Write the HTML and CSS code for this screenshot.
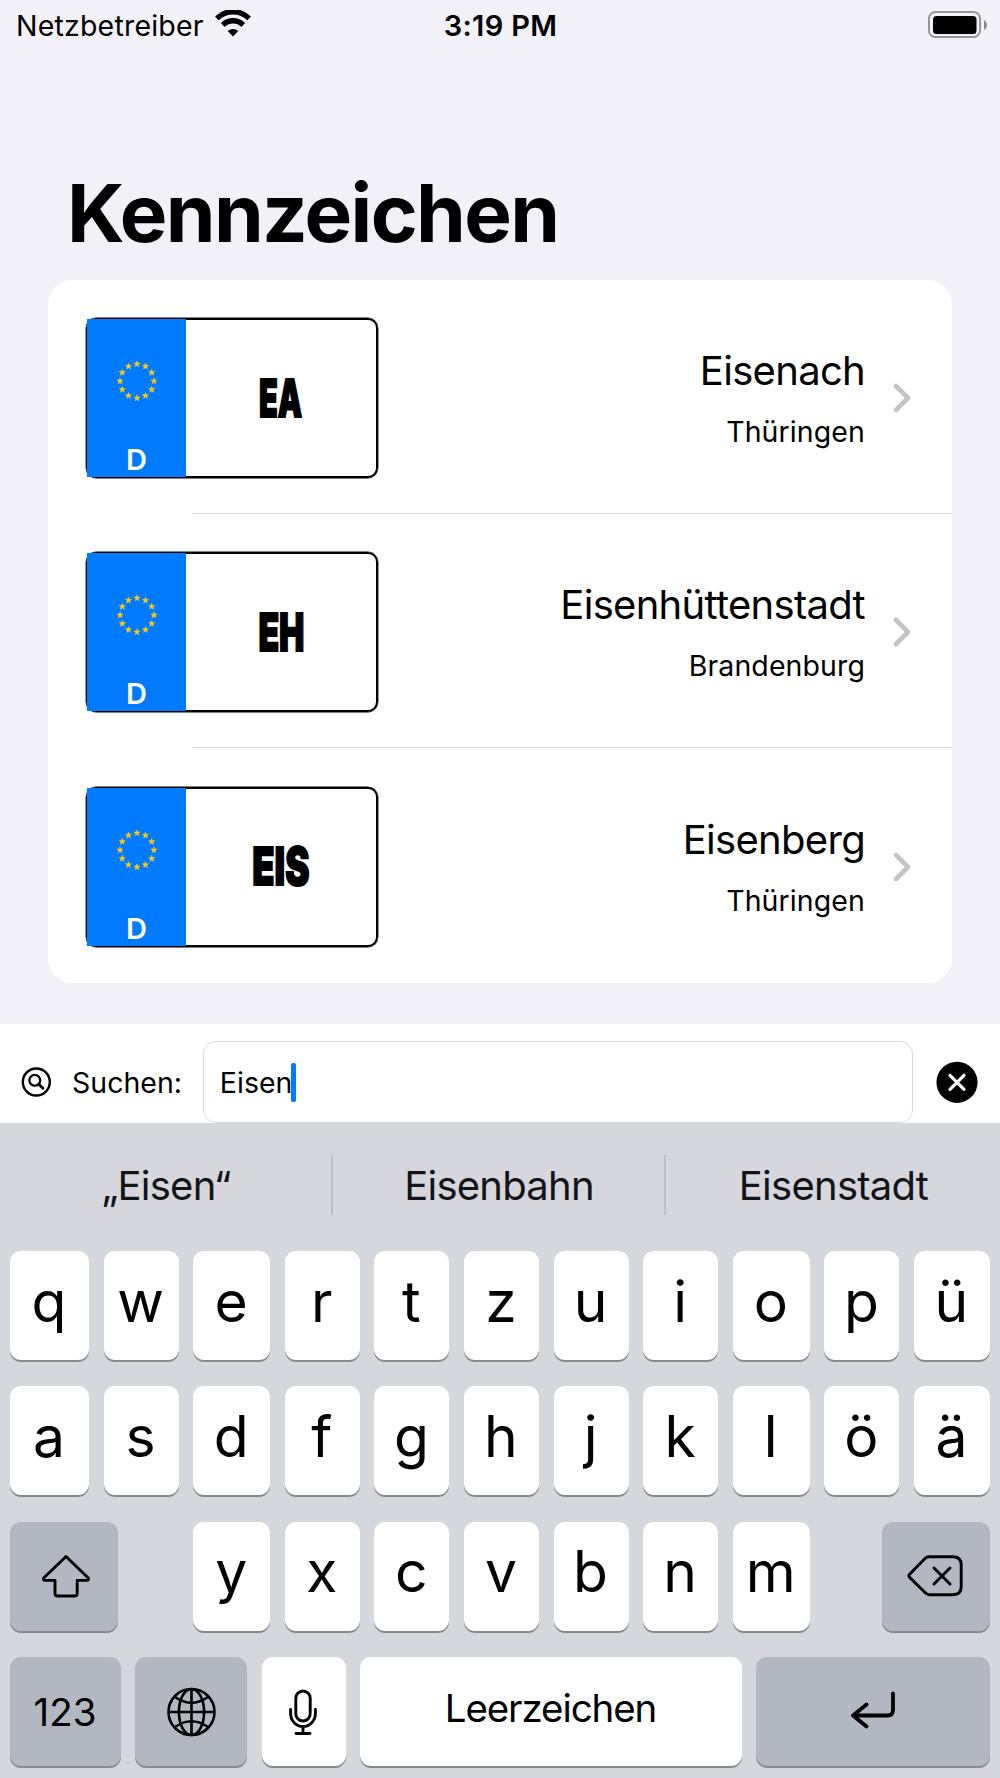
FILE: index.html
```
<!DOCTYPE html>
<html lang="de">

<head>
    <meta charset="UTF-8" />
    <meta name="viewport" content="width=device-width, initial-scale=1.0" />
    <title>Kennzeichen</title>
    <link rel="stylesheet" href="styles.css">
</head>

<body>
    <div class="status-bar">
        <div class="carrier">
            <span>Netzbetreiber</span>
            <svg class="wifi" viewBox="0 0 36 27" width="36" height="27">
                <path d="M1.8 8.4 A23 23 0 0 1 34.2 8.4" fill="none" stroke="#000" stroke-width="5.4" />
                <path d="M7.8 15 A14.4 14.4 0 0 1 28.2 15" fill="none" stroke="#000" stroke-width="5.4" />
                <path d="M12.7 21 A8 8 0 0 1 23.3 21 L18 26.5 Z" />
            </svg>
        </div>
        <span class="time">3:19 PM</span>
        <svg class="battery" viewBox="0 0 60 28" width="60" height="28">
            <rect x="1" y="1" width="51" height="25" rx="6.5" fill="none" stroke="#96959b" stroke-width="2" />
            <rect x="5" y="5" width="43.5" height="18" rx="3.5" />
            <path d="M56 9 Q59 11 59 14 Q59 17 56 19 Z" fill="#85848a" />
        </svg>
    </div>

    <h1>Kennzeichen</h1>

    <main class="list" id="list"></main>

    <div class="search">
        <svg class="search-icon" viewBox="0 0 30 30" width="30" height="30" fill="none" stroke="#000" stroke-linecap="round">
            <circle cx="15.3" cy="15" r="13.5" stroke-width="2.4" />
            <circle cx="13.8" cy="13.3" r="5.4" stroke-width="2.3" />
            <path d="M17.8 17.3 L21.9 21.3" stroke-width="2.8" />
        </svg>
        <label>Suchen:</label>
        <div class="field"><span>Eisen</span><i class="caret"></i></div>
        <svg class="clear" viewBox="0 0 42 42" width="42" height="42">
            <circle cx="21" cy="21.3" r="20.6" />
            <path d="M14 14.3 L28 28.3 M28 14.3 L14 28.3" stroke="#fff" stroke-width="3.2" stroke-linecap="round" />
        </svg>
    </div>

    <div class="keyboard">
        <div class="suggestions">
            <div>„Eisen“</div>
            <div>Eisenbahn</div>
            <div>Eisenstadt</div>
        </div>
        <div class="keys" id="row1"></div>
        <div class="keys" id="row2"></div>
        <div class="keys" id="row3">
            <div class="key dark shift">
                <svg viewBox="0 0 50 44" width="50" height="44" fill="none" stroke="#000" stroke-width="2.9" stroke-linejoin="round">
                    <path d="M25 2.5 L47.3 24 Q48 26.4 46 26.4 H36.2 V39.5 Q36.2 42 33.5 42 H16.5 Q14 42 14 39.5 V26.4 H4 Q2 26.4 2.7 24 Z" />
                </svg>
            </div>
            <div class="key dark backspace">
                <svg viewBox="0 0 56 42" width="56" height="42" fill="none" stroke="#000" stroke-width="2.9" stroke-linecap="round" stroke-linejoin="round">
                    <path d="M18.5 3 Q20.5 1.8 22.5 1.8 H46 Q54.2 1.8 54.2 10 V31.5 Q54.2 39.7 46 39.7 H22.5 Q20.3 39.7 18.3 37.7 L2.6 22.4 Q1.2 20.8 2.6 19.2 Z" />
                    <path d="M27 13 L43 29 M43 13 L27 29" />
                </svg>
            </div>
        </div>
        <div class="bottom-row">
            <div class="key dark"><span class="num">123</span></div>
            <div class="key dark">
                <svg viewBox="0 0 50 50" width="50" height="50" fill="none" stroke="#000" stroke-width="2.6">
                    <circle cx="25.5" cy="25" r="23" />
                    <ellipse cx="25.5" cy="25" rx="12.6" ry="23" />
                    <path d="M25.5 2 V48 M2.5 25 H48.5 M9 10 Q25.5 21.5 42 10 M9 40 Q25.5 28.5 42 40" />
                </svg>
            </div>
            <div class="key mic">
                <svg viewBox="0 0 30 48" width="30" height="48" fill="none" stroke="#000" stroke-width="2.9" stroke-linecap="round">
                    <rect x="7.8" y="3" width="14.4" height="30" rx="7.2" />
                    <path d="M2.6 21.5 V25.5 A12.4 13 0 0 0 27.4 25.5 V21.5 M15 38.6 V45.5 M8 45.5 H22" />
                </svg>
            </div>
            <div class="key"><span class="space">Leerzeichen</span></div>
            <div class="key dark return">
                <svg viewBox="0 0 46 38" width="46" height="38" fill="none" stroke="#000" stroke-width="3.8" stroke-linecap="round" stroke-linejoin="round">
                    <path d="M43 2.5 V19 Q43 24.5 37.5 24.5 H3 M16.5 13.5 L3 24.5 L16.5 35.5" />
                </svg>
            </div>
        </div>
    </div>

    <script>
        // stretch: horizontal squeeze that gives the plate lettering its width
        const places = [
            { code: "EA", stretch: 0.59, city: "Eisenach", state: "Thüringen" },
            { code: "EH", stretch: 0.65, city: "Eisenhüttenstadt", state: "Brandenburg" },
            { code: "EIS", stretch: 0.7, city: "Eisenberg", state: "Thüringen" }
        ];

        // twelve stars on a circle, all upright
        let stars = "";
        for (let i = 0; i < 12; i++) {
            const a = i * Math.PI / 6;
            const x = 20 + 17 * Math.sin(a);
            const y = 20 - 17 * Math.cos(a);
            stars += `<path transform="translate(${x.toFixed(2)} ${y.toFixed(2)})" d="M0 -3.2 L.8 -1 L3.1 -1 L1.3 .5 L1.9 2.8 L0 1.4 L-1.9 2.8 L-1.3 .5 L-3.1 -1 L-.8 -1 Z" />`;
        }

        document.getElementById("list").innerHTML = places.map(p => `
            <div class="row">
                <div class="plate">
                    <div class="euro">
                        <svg viewBox="0 0 40 40" width="40" height="40" fill="#fecb0e" stroke="#fecb0e" stroke-width=".5">${stars}</svg>
                        <span>D</span>
                    </div>
                    <div class="code"><span style="transform: scaleX(${p.stretch})">${p.code}</span></div>
                </div>
                <div class="place">
                    <div class="city">${p.city}</div>
                    <div class="state">${p.state}</div>
                </div>
                <svg class="chevron" viewBox="0 0 18 30" width="18" height="30">
                    <path d="M3 3 L15 15 L3 27" fill="none" stroke="#c4c4c7" stroke-width="4.6" stroke-linecap="round" stroke-linejoin="round" />
                </svg>
            </div>`).join("");

        const makeKeys = letters => [...letters].map(l => `<div class="key">${l}</div>`).join("");
        document.getElementById("row1").innerHTML = makeKeys("qwertzuiopü");
        document.getElementById("row2").innerHTML = makeKeys("asdfghjklöä");
        document.querySelector(".shift").insertAdjacentHTML("afterend", makeKeys("yxcvbnm"));
    </script>
</body>

</html>
```
FILE: styles.css
```
* {
    box-sizing: border-box;
}

body {
    margin: 0;
    height: 1778px;
    overflow: hidden;
    background: #f2f1f8;
    color: #000;
    font-family: Inter, "Liberation Sans", sans-serif;
}

svg {
    display: block;
    flex-shrink: 0;
}

.status-bar {
    height: 50px;
    padding: 0 12px 0 16px;
    display: grid;
    grid-template-columns: 1fr auto 1fr;
    align-items: center;
    font-size: 28.5px;
    letter-spacing: 0.2px;
}

.carrier {
    display: flex;
    align-items: center;
    gap: 11px;
}

.wifi {
    margin-top: -3px;
}

.time {
    font-size: 29px;
    font-weight: 600;
    letter-spacing: 0.35px;
    padding-right: 3px;
}

.battery {
    justify-self: end;
    margin-top: -1px;
}

h1 {
    margin: 0;
    height: 230px;
    padding: 115px 0 0 67px;
    font-size: 80px;
    line-height: 96px;
    font-weight: 700;
    letter-spacing: -1.65px;
}

.list {
    width: 904px;
    height: 703px;
    margin: 0 48px;
    background: #fff;
    border-radius: 25px;
    overflow: hidden;
}

.row {
    height: 234.3px;
    padding: 2px 41px 0 38px;
    display: flex;
    align-items: center;
    background: linear-gradient(#d8d8da, #d8d8da) no-repeat 145px 100% / 100% 1.3px;
}

.row:last-child {
    background: none;
}

.plate {
    width: 292px;
    height: 160px;
    display: flex;
    border: 2px solid #000;
    border-radius: 10px;
    box-shadow: 0 0 0 0.4px #000;
}

.euro {
    width: 99px;
    height: 158px;
    margin: -1px 0 0 -1px;
    background: #007aff;
    color: #fff;
    display: flex;
    flex-direction: column;
    align-items: center;
    font-size: 29px;
    font-weight: 600;
    line-height: 34px;
}

.euro svg {
    margin: 42px 0 42px;
}

.code {
    flex: 1;
    display: flex;
    align-items: center;
    justify-content: center;
    font-size: 52px;
    font-weight: 900;
}

.code span {
    -webkit-text-stroke: 1.8px #000;
}

.place {
    flex: 1;
    text-align: right;
    padding-right: 28px;
}

.city {
    font-size: 40px;
    line-height: 48px;
    letter-spacing: -0.7px;
}

.state {
    font-size: 28.5px;
    line-height: 34px;
    letter-spacing: 0.1px;
    margin-top: 20px;
}

.search {
    height: 99px;
    margin-top: 41px;
    padding: 17px 22px 0 21px;
    background: #fff;
    display: flex;
    align-items: center;
    font-size: 28.5px;
}

.search label {
    width: 131px;
    margin-left: 21px;
}

.field {
    width: 711px;
    height: 82px;
    margin-right: 23px;
    padding-left: 16px;
    border: 1px solid #d9d9da;
    border-radius: 13px;
    display: flex;
    align-items: center;
}

.caret {
    width: 5px;
    height: 39px;
    margin-left: -1px;
    border-radius: 2px;
    background: #007aff;
}

.keyboard {
    height: 655px;
    background: #d6d7dd;
}

.suggestions {
    height: 128px;
    display: grid;
    grid-template-columns: 333px 333px 334px;
    padding-top: 32px;
    font-size: 40px;
    letter-spacing: -0.75px;
    color: #141418;
}

.suggestions div {
    height: 60px;
    line-height: 62px;
    padding-left: 1px;
    text-align: center;
    border-right: 2px solid #bfc0c6;
}

.suggestions div:last-child {
    border-right: none;
}

.keys,
.bottom-row {
    display: grid;
    height: 109px;
    margin: 0 10px 26.4px;
}

.keys {
    grid-template-columns: 79px 75px 77px 75px 75px 75px 75px 75px 77px 75px 76px;
    justify-content: space-between;
}

.bottom-row {
    grid-template-columns: 111px 112px 84.5px 381.5px 234px;
    justify-content: space-between;
    margin-bottom: 0;
}

.key {
    background: #fff;
    border-radius: 11px;
    box-shadow: 0 2px 0 #88898e;
    display: flex;
    align-items: center;
    justify-content: center;
    font-size: 57px;
    font-weight: 370;
    line-height: 100px;
    padding-right: 1px;
    padding-bottom: 8px;
}

.dark,
.mic {
    padding-bottom: 0;
}

.dark {
    background: #b3b7c2;
}

.shift {
    grid-column: 1;
    width: 108px;
    padding-left: 4px;
}

.shift + .key {
    grid-column: 3;
}

.backspace {
    grid-column: 10 / 12;
    width: 108px;
    justify-self: end;
}

.return {
    padding-bottom: 4px;
}

.num,
.space {
    font-size: 38.5px;
    font-weight: 400;
}

.space {
    letter-spacing: -1.1px;
}
```
